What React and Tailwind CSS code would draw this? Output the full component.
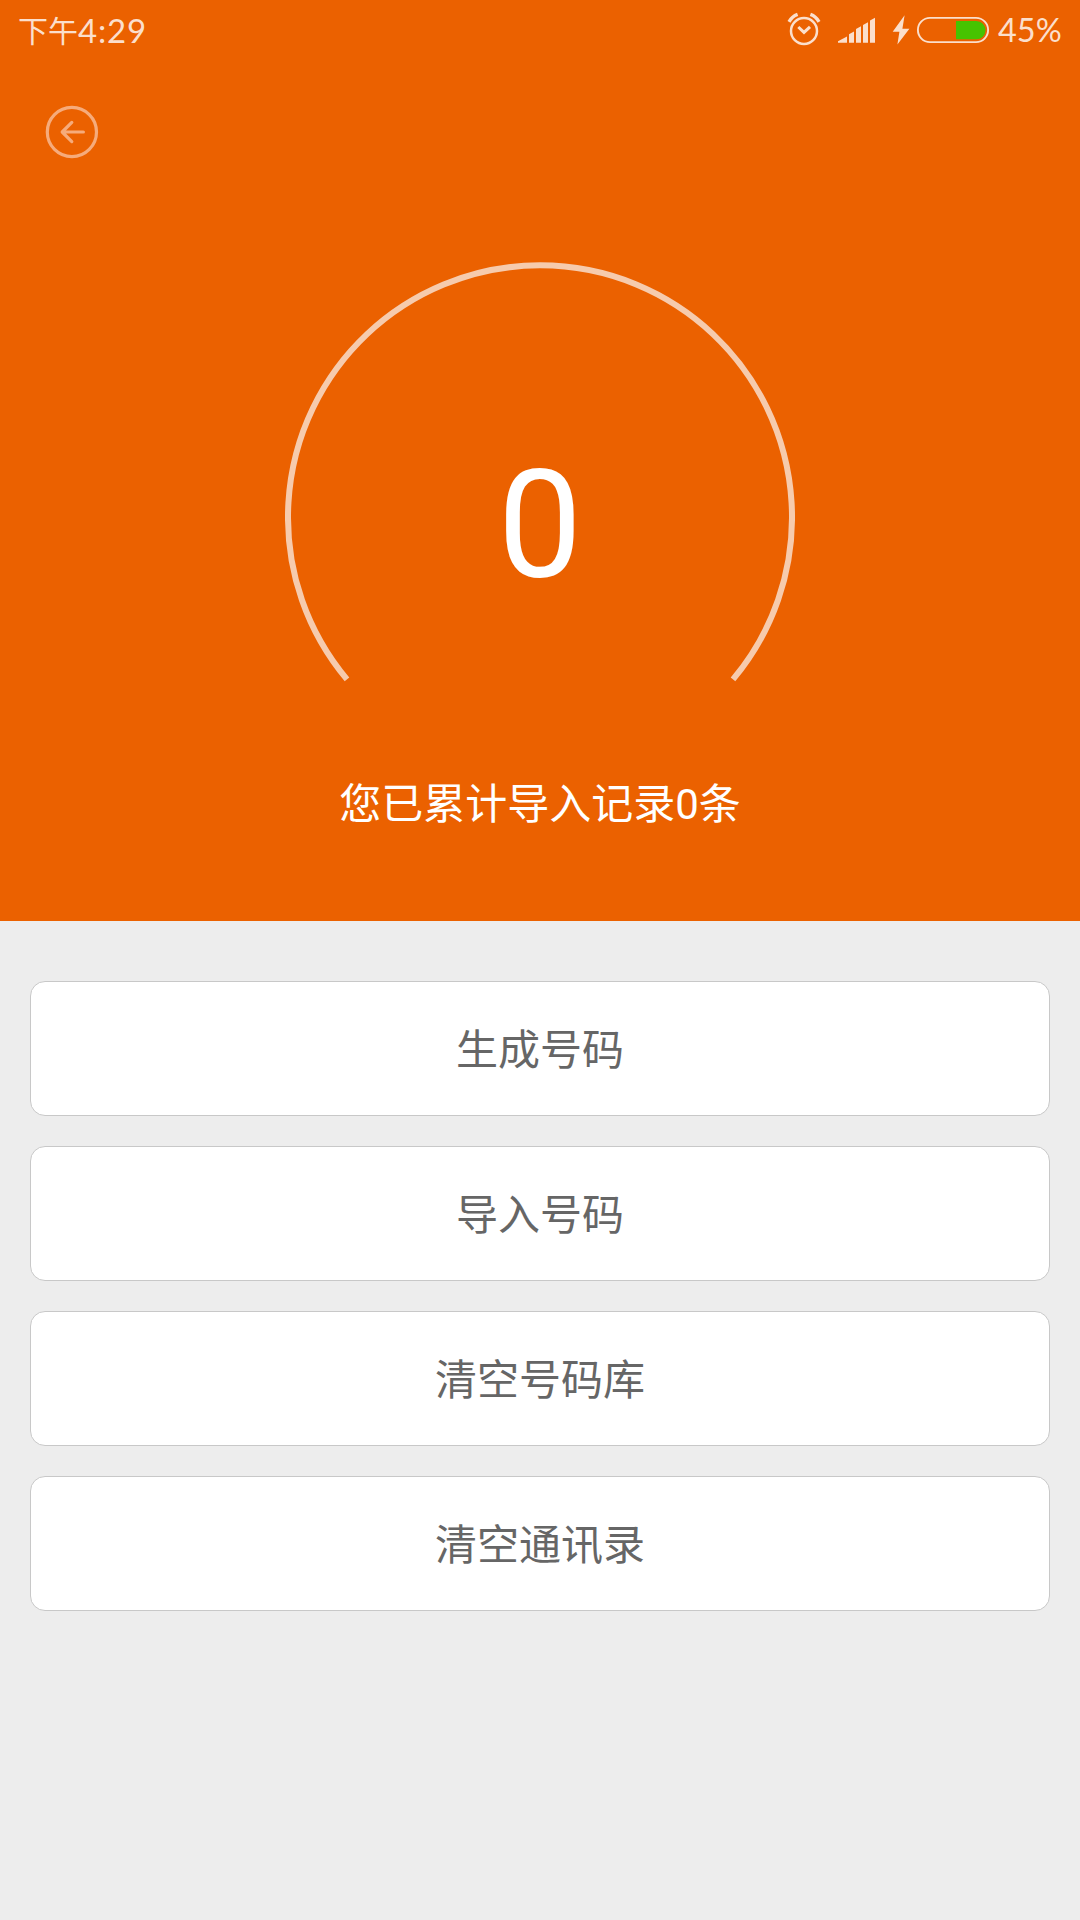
const actions = ['生成号码', '导入号码', '清空号码库', '清空通讯录'];

function AlarmIcon() {
  return (
    <svg width="34" height="36" viewBox="0 0 34 36" fill="none" stroke="currentColor" className="shrink-0">
      <circle cx="17" cy="19" r="13" strokeWidth="2.5" />
      <path d="M11.3 15L17 20.4L23 14.8" strokeWidth="3" />
      <path d="M2 9.8Q5 4.4 10.6 2.4" strokeWidth="3.4" />
      <path d="M32 9.8Q29 4.4 23.4 2.4" strokeWidth="3.4" />
    </svg>
  );
}

function SignalIcon() {
  return (
    <svg width="38" height="26" viewBox="0 0 38 26" fill="currentColor" className="ml-[17px] shrink-0">
      <path d="M0 25.8V24.2L9 19.5V25.8Z" />
      <path d="M11 25.8V17.2L16 14.6V25.8Z" />
      <path d="M18 25.8V12L23 9.2V25.8Z" />
      <path d="M25 25.8V8L30 5.2V25.8Z" />
      <path d="M32 25.8V3.4L37 .8V25.8Z" />
    </svg>
  );
}

function BatteryIcon() {
  return (
    <svg width="98" height="30" viewBox="0 0 98 30" fill="none" className="ml-4 shrink-0">
      <path d="M12.6 .3L.7 16.8H7.4L5.4 29.5L17.4 13.8H10.4Z" fill="currentColor" />
      <rect x="25.9" y="2.9" width="70.2" height="24.2" rx="12.1" stroke="currentColor" strokeWidth="1.9" />
      <path d="M64 6.1H84.4A9.1 9.1 0 0 1 84.4 24.3H64Z" fill="#46c300" />
    </svg>
  );
}

function StatusBar() {
  return (
    <div className="flex h-[60px] items-center justify-between px-[18px] text-[#fbdfcc]">
      <div className="flex items-center leading-none">
        <span className="pt-[4px] text-[30px]">下午</span>
        <span className="font-[Lato,sans-serif] text-[33px] tracking-[0.8px]">4:29</span>
      </div>
      <div className="flex items-center">
        <AlarmIcon />
        <SignalIcon />
        <BatteryIcon />
        <span className="ml-2 w-16 whitespace-nowrap font-[Lato,sans-serif] text-[32.5px] leading-none">45%</span>
      </div>
    </div>
  );
}

export default function App() {
  const count = 0;

  return (
    <div className="h-[1920px] w-[1080px] overflow-hidden bg-[#ededed] font-[Roboto,'Noto_Sans_CJK_SC',sans-serif]">
      <header className="flex h-[921px] flex-col bg-[#eb6100]">
        <StatusBar />

        <button className="ml-[45px] mt-[45px] h-[54px] w-[54px] text-[#f6ab7b]">
          <svg width="54" height="54" viewBox="0 0 54 54" fill="none" stroke="currentColor" strokeWidth="3.2" strokeLinecap="round" strokeLinejoin="round">
            <circle cx="26.9" cy="27" r="24.6" />
            <path d="M26.8 17.4L17.2 27L26.8 36.6M17.5 27H38.4" />
          </svg>
        </button>

        {/* Gauge */}
        <div className="mt-[103px] grid h-[422px] place-items-center">
          <svg width="510" height="422" viewBox="0 0 510 422" fill="none" className="col-start-1 row-start-1">
            <path d="M62 417.4A252 252 0 1 1 448 417.4" stroke="#f6cbad" strokeWidth="6" />
          </svg>
          <span className="col-start-1 row-start-1 pt-[105px] text-[150px] leading-none text-white">{count}</span>
        </div>

        <p className="mt-[91px] text-center text-[42px] leading-[60px] text-white">您已累计导入记录{count}条</p>
      </header>

      <main className="flex flex-col gap-[30px] px-[30px] pt-[60px]">
        {actions.map((label) => (
          <button key={label} className="h-[135px] rounded-[15px] border border-[#c8c8c8] bg-white pt-1 text-[42px] text-[#666]">
            {label}
          </button>
        ))}
      </main>
    </div>
  );
}
